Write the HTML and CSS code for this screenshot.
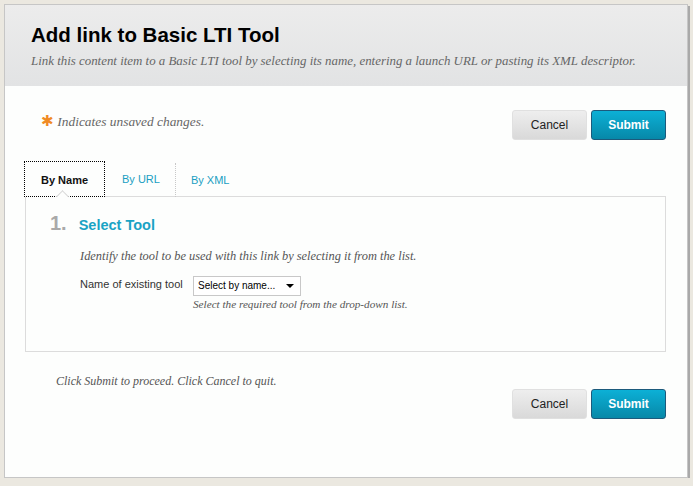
FILE: index.html
```html
<!DOCTYPE html>
<html lang="en">
<head>
    <meta charset="UTF-8">
    <title>Add link to Basic LTI Tool</title>
    <link rel="stylesheet" href="styles.css">
</head>
<body>
    <div class="panel">
        <div class="header">
            <h1>Add link to Basic LTI Tool</h1>
            <p class="subtitle">Link this content item to a Basic LTI tool by selecting its name, entering a launch URL or pasting its XML descriptor.</p>
        </div>

        <div class="top-row">
            <p class="notice"><span class="star">&#x2731;</span> Indicates unsaved changes.</p>
            <div class="buttons">
                <button class="btn cancel">Cancel</button>
                <button class="btn submit">Submit</button>
            </div>
        </div>

        <div class="tabs">
            <div class="tab active">By Name</div>
            <div class="tab">By URL</div>
            <div class="tab sep">By XML</div>
        </div>

        <div class="tab-box">
            <div class="step-title">
                <span class="step-num">1.</span>
                <span class="step-name">Select Tool</span>
            </div>
            <p class="instructions">Identify the tool to be used with this link by selecting it from the list.</p>
            <div class="field">
                <label class="field-label">Name of existing tool</label>
                <div class="field-input">
                    <div class="select">Select by name... <span class="arrow"></span></div>
                    <p class="help">Select the required tool from the drop-down list.</p>
                </div>
            </div>
        </div>

        <div class="bottom">
            <p class="footer-note">Click Submit to proceed. Click Cancel to quit.</p>
            <div class="buttons bottom-buttons">
                <button class="btn cancel">Cancel</button>
                <button class="btn submit">Submit</button>
            </div>
        </div>
    </div>
</body>
</html>
```

FILE: styles.css
```css
body {
    margin: 0;
    background-color: #ebe8e0;
    font-family: "Liberation Sans", Arial, sans-serif;
}

.panel {
    width: 682px;
    height: 472px;
    margin: 4px 0 0 4px;
    border: 1px solid #c6c6c6;
    box-shadow: 2px 2px 0 #a9a9a9;
    background-color: #fdfefd;
    display: flex;
    flex-direction: column;
}

.header {
    height: 81px;
    box-sizing: border-box;
    padding: 17px 26px 0 26px;
    background: linear-gradient(#ececec, #e2e3e4);
}

h1 {
    margin: 0;
    font-size: 20.5px;
    line-height: 25px;
    color: #000;
}

.subtitle {
    margin: 6px 0 0 0;
    font-family: "Liberation Serif", "Times New Roman", serif;
    font-style: italic;
    font-size: 12.9px;
    line-height: 16px;
    color: #666;
}

.top-row {
    display: flex;
    justify-content: space-between;
    align-items: flex-start;
    padding: 24px 21px 0 36px;
}

.notice {
    margin: 3px 0 0 0;
    font-family: "Liberation Serif", "Times New Roman", serif;
    font-style: italic;
    font-size: 13.4px;
    line-height: 16px;
    color: #666;
}

.star {
    color: #f08a24;
    font-style: normal;
    font-size: 15px;
}

.buttons {
    display: flex;
    gap: 4px;
}

.btn {
    width: 75px;
    height: 30px;
    border-radius: 3px;
    font-family: "Liberation Sans", Arial, sans-serif;
    font-size: 12px;
    cursor: pointer;
}

.cancel {
    background: linear-gradient(#eeeeee, #d9d9d9);
    border: 1px solid #e0e0e0;
    color: #222;
}

.submit {
    background: linear-gradient(#0cb0d6, #0788a8);
    border: 1px solid #1c5a7c;
    color: #fff;
    font-weight: bold;
}

.tabs {
    display: flex;
    margin: 21px 0 0 19px;
    height: 36px;
}

.tab {
    position: relative;
    padding: 0 17px 0 17px;
    font-size: 11px;
    line-height: 36px;
    color: #1a9ec2;
}

.tab.active {
    width: 81px;
    box-sizing: border-box;
    padding: 0;
    text-align: center;
    font-weight: bold;
    color: #111;
    border: 1px dotted #000;
    background-color: #fdfefd;
    z-index: 1;
}

.tab.active::after {
    content: "";
    position: absolute;
    left: 33px;
    bottom: -5px;
    width: 8px;
    height: 8px;
    background-color: #fdfefd;
    border-top: 1px solid #d6d6d6;
    border-left: 1px solid #d6d6d6;
    transform: rotate(45deg);
}

.tab.sep {
    border-left: 1px dotted #c8c8c8;
    margin-left: -2px;
    padding-left: 15px;
    margin-top: 2px;
    line-height: 34px;
}

.tab-box {
    margin: -1px 21px 0 20px;
    height: 156px;
    box-sizing: border-box;
    border: 1px solid #dcdcdc;
    padding: 15px 0 0 24px;
}

.step-title {
    display: flex;
    align-items: baseline;
    gap: 12px;
}

.step-num {
    font-size: 20px;
    font-weight: bold;
    color: #a9a9a9;
}

.step-name {
    font-size: 14.5px;
    font-weight: bold;
    color: #1aa3c4;
}

.instructions {
    margin: 14px 0 0 30px;
    font-family: "Liberation Serif", "Times New Roman", serif;
    font-style: italic;
    font-size: 12.4px;
    color: #555;
}

.field {
    display: flex;
    margin: 12px 0 0 30px;
}

.field-label {
    width: 113px;
    font-size: 11px;
    line-height: 16px;
    color: #333;
}

.select {
    width: 108px;
    height: 20px;
    box-sizing: border-box;
    border: 1px solid #c8c8c8;
    padding: 0 6px 0 4px;
    font-size: 10px;
    line-height: 18px;
    color: #000;
    display: flex;
    justify-content: space-between;
    align-items: center;
    background-color: #fff;
}

.arrow {
    width: 0;
    height: 0;
    border-left: 4px solid transparent;
    border-right: 4px solid transparent;
    border-top: 4px solid #000;
}

.help {
    margin: 2px 0 0 0;
    font-family: "Liberation Serif", "Times New Roman", serif;
    font-style: italic;
    font-size: 11.2px;
    color: #555;
}

.bottom {
    padding: 21px 21px 0 51px;
}

.footer-note {
    margin: 0;
    font-family: "Liberation Serif", "Times New Roman", serif;
    font-style: italic;
    font-size: 12px;
    line-height: 16px;
    color: #555;
}

.bottom-buttons {
    justify-content: flex-end;
    margin-top: 0;
}
```
